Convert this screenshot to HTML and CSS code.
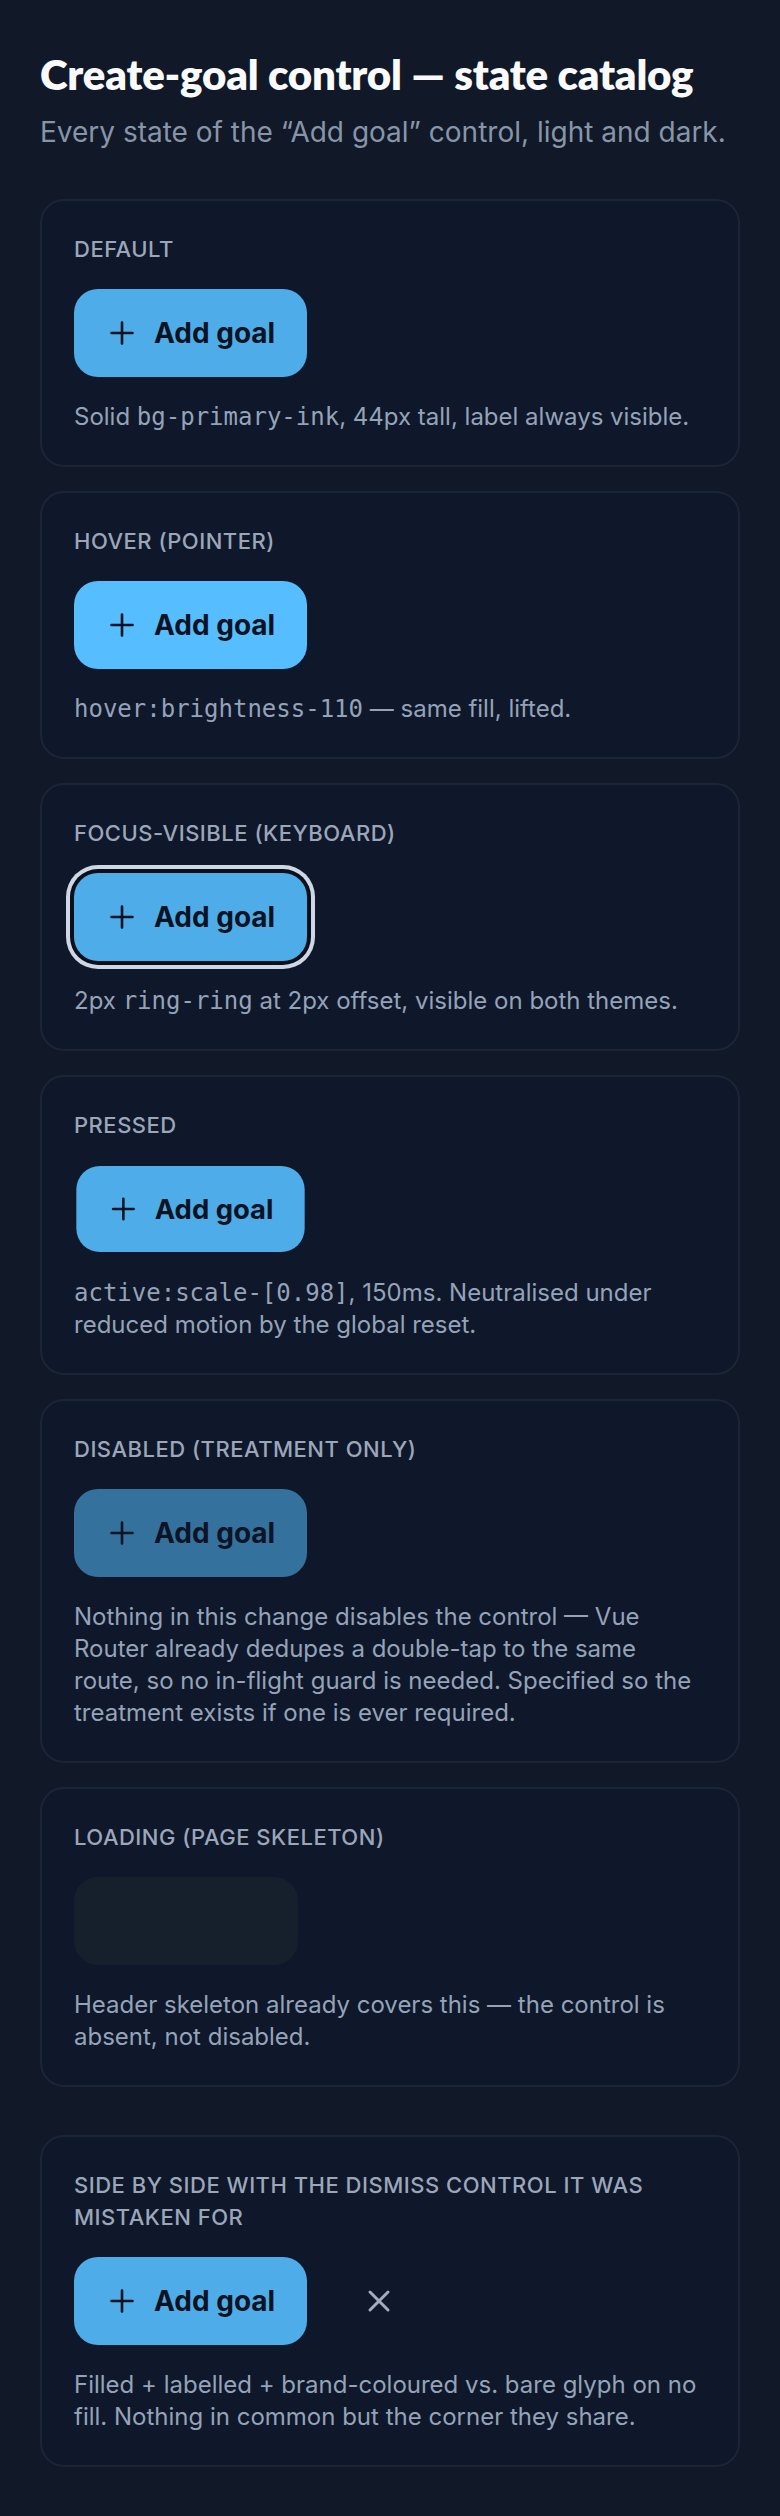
FILE: index.html
```
<!DOCTYPE html>
<html lang="en">
<head>
<meta charset="utf-8">
<title>Create-goal control — state catalog</title>
<link rel="stylesheet" href="styles.css">
</head>
<body>
<main class="catalog">
  <header class="intro">
    <h1>Create-goal control — state catalog</h1>
    <p>Every state of the “Add goal” control, light and dark.</p>
  </header>

  <section class="state-list">
    <article class="state-card">
      <h2 class="state-name">Default</h2>
      <div class="state-demo">
        <button class="add-goal" type="button">
          <svg viewBox="0 0 24 24" aria-hidden="true"><path d="M12 5v14M5 12h14"/></svg>
          Add goal
        </button>
      </div>
      <p class="state-note">Solid <code>bg-primary-ink</code>, 44px tall, label always visible.</p>
    </article>

    <article class="state-card">
      <h2 class="state-name">Hover (pointer)</h2>
      <div class="state-demo">
        <button class="add-goal is-hover" type="button">
          <svg viewBox="0 0 24 24" aria-hidden="true"><path d="M12 5v14M5 12h14"/></svg>
          Add goal
        </button>
      </div>
      <p class="state-note"><code>hover:brightness-110</code> — same fill, lifted.</p>
    </article>

    <article class="state-card">
      <h2 class="state-name">Focus-visible (keyboard)</h2>
      <div class="state-demo">
        <button class="add-goal is-focus" type="button">
          <svg viewBox="0 0 24 24" aria-hidden="true"><path d="M12 5v14M5 12h14"/></svg>
          Add goal
        </button>
      </div>
      <p class="state-note">2px <code>ring-ring</code> at 2px offset, visible on both themes.</p>
    </article>

    <article class="state-card">
      <h2 class="state-name">Pressed</h2>
      <div class="state-demo">
        <button class="add-goal is-pressed" type="button">
          <svg viewBox="0 0 24 24" aria-hidden="true"><path d="M12 5v14M5 12h14"/></svg>
          Add goal
        </button>
      </div>
      <p class="state-note"><code>active:scale-[0.98]</code>, 150ms. Neutralised under reduced motion by the global reset.</p>
    </article>

    <article class="state-card">
      <h2 class="state-name">Disabled (treatment only)</h2>
      <div class="state-demo">
        <button class="add-goal" type="button" disabled>
          <svg viewBox="0 0 24 24" aria-hidden="true"><path d="M12 5v14M5 12h14"/></svg>
          Add goal
        </button>
      </div>
      <p class="state-note">Nothing in this change disables the control — Vue Router already dedupes a double-tap to the same route, so no in-flight guard is needed. Specified so the treatment exists if one is ever required.</p>
    </article>

    <article class="state-card">
      <h2 class="state-name">Loading (page skeleton)</h2>
      <div class="state-demo">
        <div class="skeleton"></div>
      </div>
      <p class="state-note">Header skeleton already covers this — the control is absent, not disabled.</p>
    </article>
  </section>

  <section class="state-list compare">
    <article class="state-card">
      <h2 class="state-name">Side by side with the dismiss control it was mistaken for</h2>
      <div class="state-demo">
        <button class="add-goal" type="button">
          <svg viewBox="0 0 24 24" aria-hidden="true"><path d="M12 5v14M5 12h14"/></svg>
          Add goal
        </button>
        <button class="dismiss" type="button" aria-label="Dismiss">
          <svg viewBox="0 0 24 24" aria-hidden="true"><path d="M18 6 6 18M6 6l12 12"/></svg>
        </button>
      </div>
      <p class="state-note">Filled + labelled + brand-coloured vs. bare glyph on no fill. Nothing in common but the corner they share.</p>
    </article>
  </section>
</main>
</body>
</html>
```

FILE: styles.css
```
body {
    margin: 0;
    background: #111827;
    color: #94a3b8;
    font-family: "Inter", "Noto Sans", sans-serif;
}

.catalog {
    padding: 50px 40px 48px;
}

.intro h1 {
    margin: 0 0 14px;
    font-family: "Lato", "Inter", sans-serif;
    font-weight: 800;
    font-size: 42px;
    line-height: 48px;
    color: #f8fafc;
    letter-spacing: -0.2px;
}

.intro p {
    margin: 0;
    font-size: 28px;
    line-height: 40px;
    color: #8795a9;
}

.state-list {
    display: flex;
    flex-direction: column;
    gap: 24px;
    margin-top: 47px;
}

.state-list.compare {
    margin-top: 48px;
}

.state-card {
    display: flex;
    flex-direction: column;
    gap: 24px;
    padding: 32px;
    border: 2px solid #1c2536;
    border-radius: 24px;
    background: #0f172a;
}

.state-name {
    margin: 0;
    font-size: 22px;
    line-height: 32px;
    font-weight: 500;
    text-transform: uppercase;
    letter-spacing: 0.5px;
    color: #9ba7b9;
}

.state-note {
    margin: 0;
    font-size: 24px;
    line-height: 32px;
    color: #94a3b8;
}

.state-note code {
    font-family: "DejaVu Sans Mono", "Liberation Mono", monospace;
    font-size: 24px;
    line-height: 1;
}

.state-demo {
    display: flex;
    align-items: center;
    gap: 28px;
}

/* the control itself */
.add-goal {
    display: inline-flex;
    align-items: center;
    gap: 14px;
    height: 88px;
    padding: 0 32px 0 30px;
    border: 0;
    border-radius: 24px;
    background: #4eade8;
    color: #0b1322;
    font-family: "Inter", sans-serif;
    font-size: 28px;
    font-weight: 700;
    cursor: pointer;
}

.add-goal svg {
    width: 36px;
    height: 36px;
    fill: none;
    stroke: currentColor;
    stroke-width: 1.75;
    stroke-linecap: round;
}

.add-goal.is-hover {
    background: #56bdfe;
}

.add-goal.is-focus {
    box-shadow: 0 0 0 4px #0a0f1c, 0 0 0 8px #cfd7e4;
}

.add-goal.is-pressed {
    transform: scale(0.98);
}

.add-goal:disabled {
    opacity: 0.6;
    cursor: not-allowed;
}

.skeleton {
    width: 224px;
    height: 88px;
    border-radius: 24px;
    background: #16202d;
}

.dismiss {
    display: inline-flex;
    align-items: center;
    justify-content: center;
    width: 88px;
    height: 88px;
    padding: 0;
    border: 0;
    background: none;
    color: #a3adbb;
    cursor: pointer;
}

.dismiss svg {
    width: 36px;
    height: 36px;
    fill: none;
    stroke: currentColor;
    stroke-width: 2;
    stroke-linecap: round;
}
```
